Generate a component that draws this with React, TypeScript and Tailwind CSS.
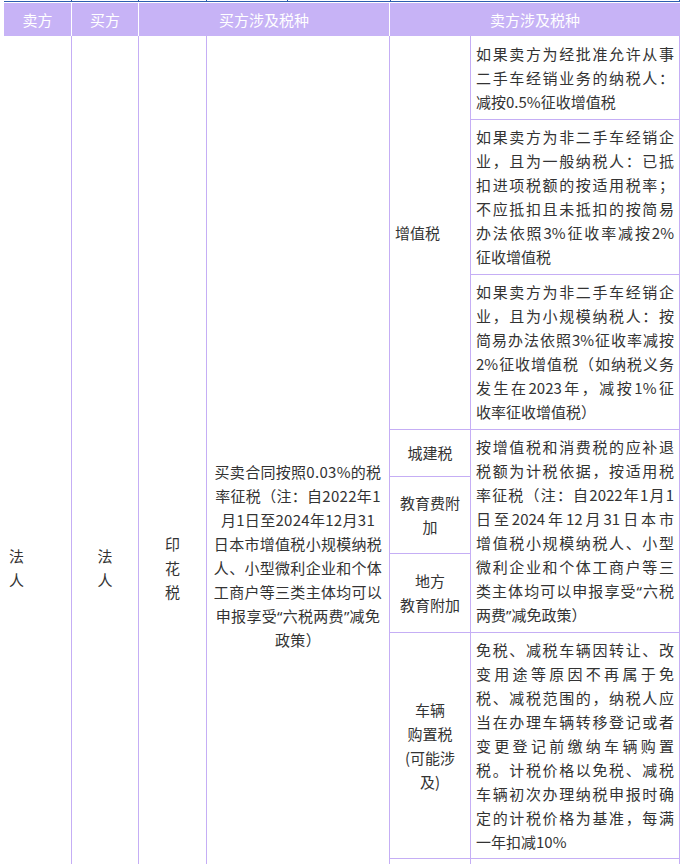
import React from "react";

type Para = { lines: React.ReactNode[] };

// curly quotes set in a latin face so they stay narrow as in the original
const Q = ({ c }: { c: string }) => (
    <span className="font-['Noto_Sans','Liberation_Sans',sans-serif]">{c}</span>
);

const vatRows: Para[] = [
    {
        lines: [
            "如果卖方为经批准允许从事",
            "二手车经销业务的纳税人：",
            "减按0.5%征收增值税",
        ],
    },
    {
        lines: [
            "如果卖方为非二手车经销企",
            "业，且为一般纳税人：已抵",
            "扣进项税额的按适用税率；",
            "不应抵扣且未抵扣的按简易",
            "办法依照3%征收率减按2%",
            "征收增值税",
        ],
    },
    {
        lines: [
            "如果卖方为非二手车经销企",
            "业，且为小规模纳税人：按",
            "简易办法依照3%征收率减按",
            "2%征收增值税（如纳税义务",
            "发生在2023年，减按1%征",
            "收率征收增值税）",
        ],
    },
];

const surcharge: React.ReactNode[] = [
    "按增值税和消费税的应补退",
    "税额为计税依据，按适用税",
    "率征税（注：自2022年1月1",
    "日至2024年12月31日本市",
    "增值税小规模纳税人、小型",
    "微利企业和个体工商户等三",
    <>
        类主体均可以申报享受<Q c="“" />六税
    </>,
    <>
        两费<Q c="”" />减免政策）
    </>,
];

const purchaseTax: React.ReactNode[] = [
    "免税、减税车辆因转让、改",
    "变用途等原因不再属于免",
    "税、减税范围的，纳税人应",
    "当在办理车辆转移登记或者",
    "变更登记前缴纳车辆购置",
    "税。计税价格以免税、减税",
    "车辆初次办理纳税申报时确",
    "定的计税价格为基准，每满",
    "一年扣减10%",
];

const stampDuty: React.ReactNode[] = [
    "买卖合同按照0.03%的税",
    "率征税（注：自2022年1",
    "月1日至2024年12月31",
    "日本市增值税小规模纳税",
    "人、小型微利企业和个体",
    "工商户等三类主体均可以",
    <>
        申报享受<Q c="“" />六税两费<Q c="”" />减免
    </>,
    "政策）",
];

// each line but the last is stretched edge to edge, like the justified original
function Justified({ lines }: { lines: React.ReactNode[] }) {
    return (
        <div className="w-full">
            {lines.map((line, i) => (
                <div
                    key={i}
                    className={
                        i < lines.length - 1
                            ? "whitespace-nowrap text-justify [text-align-last:justify]"
                            : "whitespace-nowrap text-left"
                    }
                >
                    {line}
                </div>
            ))}
        </div>
    );
}

const cell = "border-r border-b border-[#c5aef5] flex items-center";

function App() {
    return (
        <div className="min-h-screen bg-white pl-[4px] font-['Noto_Sans_CJK_SC','Noto_Sans',sans-serif] text-[15px] leading-[24px] text-[#333]">
            {/* bottom edge of the previous table row */}
            <div className="flex h-[3px] w-[676px]">
                <div className="h-[2px] w-[68px] border-r border-b border-[#2e5fae]"></div>
                <div className="h-[2px] w-[67px] border-r border-b border-[#2e5fae]"></div>
                <div className="h-[2px] w-[68px] border-r border-b border-[#2e5fae]"></div>
                <div className="h-[2px] w-[81px] border-r border-b border-[#2e5fae]"></div>
                <div className="h-[2px] w-[103px] border-r border-b border-[#2e5fae]"></div>
                <div className="h-[2px] w-[289px] border-r border-b border-[#2e5fae]"></div>
            </div>

            <div className="grid h-[33px] w-[676px] grid-cols-[68px_67px_68px_183px_81px_209px] bg-[#c7b3f6] text-white">
                <div className="flex items-center justify-center border-r border-white">
                    卖方
                </div>
                <div className="flex items-center justify-center border-r border-white">
                    买方
                </div>
                <div className="col-span-2 flex items-center justify-center border-r border-white">
                    买方涉及税种
                </div>
                <div className="col-span-2 flex items-center justify-center">
                    卖方涉及税种
                </div>
            </div>

            <div className="grid w-[676px] grid-cols-[68px_67px_68px_183px_81px_209px] grid-rows-[84px_155px_155px_47px_77px_79px_226px_241px]">
                <div className={`${cell} col-start-1 row-start-1 row-span-8 pl-[5px]`}>
                    法<br />人
                </div>
                <div className={`${cell} col-start-2 row-start-1 row-span-8 justify-center text-center`}>
                    法<br />人
                </div>
                <div className={`${cell} col-start-3 row-start-1 row-span-8 justify-center text-center`}>
                    印<br />花<br />税
                </div>
                <div className={`${cell} col-start-4 row-start-1 row-span-8 justify-center px-[3px] pb-[24px] text-center`}>
                    <div>
                        {stampDuty.map((line, i) => (
                            <div key={i} className="whitespace-nowrap tracking-[0.3px]">
                                {line}
                            </div>
                        ))}
                    </div>
                </div>

                <div className={`${cell} col-start-5 row-start-1 row-span-3 pl-[5px]`}>
                    增值税
                </div>
                {vatRows.map((p, i) => (
                    <div
                        key={i}
                        className={`${cell} col-start-6 px-[5px] ${
                            i === 0 ? "row-start-1" : i === 1 ? "row-start-2" : "row-start-3"
                        }`}
                    >
                        <Justified lines={p.lines} />
                    </div>
                ))}

                <div className={`${cell} col-start-5 row-start-4 justify-center text-center`}>
                    城建税
                </div>
                <div className={`${cell} col-start-5 row-start-5 justify-center text-center`}>
                    教育费附<br />加
                </div>
                <div className={`${cell} col-start-5 row-start-6 justify-center text-center`}>
                    地方<br />教育附加
                </div>
                <div className={`${cell} col-start-6 row-start-4 row-span-3 px-[5px]`}>
                    <Justified lines={surcharge} />
                </div>

                <div className={`${cell} col-start-5 row-start-7 justify-center text-center`}>
                    车辆<br />购置税<br />(可能涉<br />及)
                </div>
                <div className={`${cell} col-start-6 row-start-7 px-[5px]`}>
                    <Justified lines={purchaseTax} />
                </div>

                {/* next row, below the visible area */}
                <div className={`${cell} col-start-5 row-start-8`}></div>
                <div className={`${cell} col-start-6 row-start-8`}></div>
            </div>
        </div>
    );
}

export default App;
